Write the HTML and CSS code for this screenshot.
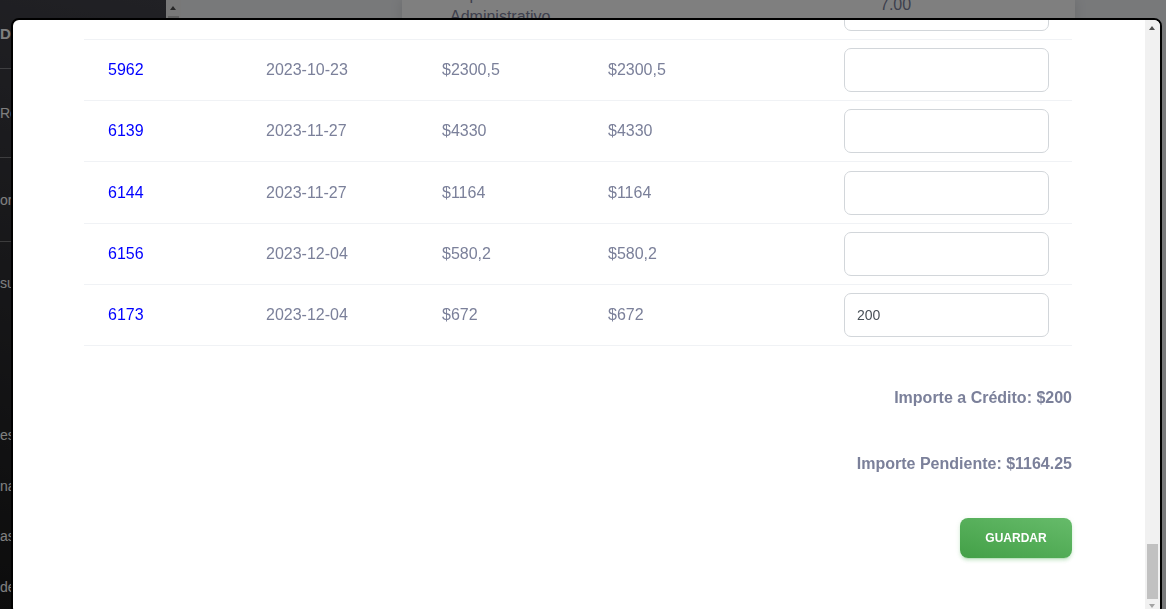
FILE: index.html
```html
<!DOCTYPE html>
<html lang="es">
<head>
<meta charset="utf-8">
<title>Registrar abono</title>
<link rel="stylesheet" href="styles.css">
</head>
<body>
<div class="page">
  <aside class="sidenav">
    <div class="sidenav-inner">
      <div class="brand">Distribuidora</div>
      <hr class="divider">
      <div class="nav-block nav-block-a">Roles</div>
      <hr class="divider">
      <div class="nav-block nav-block-b">ordenes</div>
      <hr class="divider">
      <ul class="nav-list">
        <li class="nav-item">sucursales</li>
        <li class="nav-item nav-item-in">Clientes</li>
        <li class="nav-item nav-item-in">Pagos</li>
        <li class="nav-item">estados</li>
        <li class="nav-item">nacional</li>
        <li class="nav-item">asesores</li>
        <li class="nav-item">devoluciones</li>
        <li class="nav-item nav-item-in">Salir</li>
      </ul>
    </div>
    <div class="vscroll vscroll-top" aria-hidden="true">
      <span class="vscroll-btn vscroll-up"></span>
      <span class="vscroll-track"><span class="vscroll-thumb thumb-side"></span></span>
      <span class="vscroll-btn vscroll-down"></span>
    </div>
  </aside>
  <main class="main">
    <section class="card">
      <div class="card-row">
        <div class="card-cell card-concept">Papelería<br>Administrativo</div>
        <div class="card-cell card-amount">7.00</div>
      </div>
    </section>
  </main>
</div>

<div class="backdrop"></div>

<div class="modal">
  <div class="modal-scroll">
    <div class="modal-body">
      <h5 class="modal-title">Registrar abono</h5>
      <div class="invoice-table" id="rows">
        <div class="row row-head">
          <div class="cell">Folio</div>
          <div class="cell">Fecha</div>
          <div class="cell">Total</div>
          <div class="cell">Saldo</div>
          <div class="cell">Abono</div>
        </div>
        <div class="row" id="first-visible">
          <div class="cell"><a class="folio" href="#">5962</a></div>
          <div class="cell">2023-10-23</div>
          <div class="cell">$2300,5</div>
          <div class="cell">$2300,5</div>
          <div class="cell cell-input"><input class="amount-input" type="text"></div>
        </div>
        <div class="row">
          <div class="cell"><a class="folio" href="#">6139</a></div>
          <div class="cell">2023-11-27</div>
          <div class="cell">$4330</div>
          <div class="cell">$4330</div>
          <div class="cell cell-input"><input class="amount-input" type="text"></div>
        </div>
        <div class="row">
          <div class="cell"><a class="folio" href="#">6144</a></div>
          <div class="cell">2023-11-27</div>
          <div class="cell">$1164</div>
          <div class="cell">$1164</div>
          <div class="cell cell-input"><input class="amount-input" type="text"></div>
        </div>
        <div class="row">
          <div class="cell"><a class="folio" href="#">6156</a></div>
          <div class="cell">2023-12-04</div>
          <div class="cell">$580,2</div>
          <div class="cell">$580,2</div>
          <div class="cell cell-input"><input class="amount-input" type="text"></div>
        </div>
        <div class="row">
          <div class="cell"><a class="folio" href="#">6173</a></div>
          <div class="cell">2023-12-04</div>
          <div class="cell">$672</div>
          <div class="cell">$672</div>
          <div class="cell cell-input"><input class="amount-input" type="text" value="200"></div>
        </div>
      </div>
      <div class="totals">
        <p class="total">Importe a Crédito: $200</p>
        <p class="total">Importe Pendiente: $1164.25</p>
        <button class="btn-save" type="button">Guardar</button>
      </div>
    </div>
  </div>
  <div class="vscroll vscroll-end" aria-hidden="true">
    <span class="vscroll-btn vscroll-up"></span>
    <span class="vscroll-track"><span class="vscroll-thumb thumb-modal"></span></span>
    <span class="vscroll-btn vscroll-down vscroll-disabled"></span>
  </div>
</div>
<script src="app.js"></script>
</body>
</html>
```

FILE: styles.css
```css
html, body {
  margin: 0;
  padding: 0;
  height: 100%;
  overflow: hidden;
  font-family: "Liberation Sans", Arial, sans-serif;
}

.page {
  display: flex;
  height: 100vh;
  background: #f0f2f5;
}

/* ---------- classic scrollbar (drawn) ---------- */
.vscroll {
  flex: 0 0 15px;
  width: 15px;
  display: flex;
  flex-direction: column;
  background: #f1f1f1;
}

.vscroll-btn {
  position: relative;
  flex: 0 0 15px;
  height: 15px;
}

.vscroll-up::after,
.vscroll-down::after {
  content: "";
  position: absolute;
  left: 4px;
  border-left: 3.5px solid transparent;
  border-right: 3.5px solid transparent;
}

.vscroll-up::after {
  top: 6px;
  border-bottom: 4px solid #505050;
}

.vscroll-down::after {
  top: 5px;
  border-top: 4px solid #505050;
}

.vscroll-disabled::after {
  border-top-color: #a3a3a3;
}

.vscroll-track {
  flex: 1;
  display: flex;
  flex-direction: column;
}

.vscroll-end .vscroll-track {
  justify-content: flex-end;
}

.vscroll-thumb {
  margin: 0 2px;
  background: #c1c1c1;
}

.thumb-side {
  height: 280px;
  margin-top: 1px;
}

.thumb-modal {
  height: 55px;
}

/* ---------- background page ---------- */
.sidenav {
  flex: 0 0 181px;
  display: flex;
  height: 100vh;
}

.sidenav-inner {
  width: 166px;
  flex: 0 0 166px;
  overflow: hidden;
  background: linear-gradient(195deg, #42424a, #191919);
  color: #ffffff;
  font-size: 14px;
}

.brand {
  height: 68px;
  line-height: 68px;
  font-size: 15px;
  font-weight: 700;
  white-space: nowrap;
}

.divider {
  margin: 0;
  border: 0;
  height: 1px;
  background: rgba(255, 255, 255, 0.35);
}

.nav-block {
  display: flex;
  align-items: center;
  white-space: nowrap;
}

.nav-block-a { height: 88px; }
.nav-block-b { height: 83px; }

.nav-list {
  list-style: none;
  margin: 0;
  padding: 16px 0 0;
}

.nav-item {
  height: 50.7px;
  line-height: 50px;
  white-space: nowrap;
}

.nav-item-in {
  padding-left: 40px;
}

.main {
  flex: 1;
  display: flex;
  padding: 0 91px 0 221px;
}

.card {
  width: 673px;
  background: #ffffff;
  box-shadow: 0 0 12px rgba(0, 0, 0, 0.12);
  color: #7b809a;
  font-size: 16px;
}

.card-row {
  display: flex;
  align-items: center;
  margin-top: -16px;
  padding-left: 48px;
}

.card-concept {
  width: 430px;
  line-height: 22px;
}

.card-amount {
  line-height: 22px;
  padding-bottom: 2px;
}

/* ---------- backdrop + modal ---------- */
.backdrop {
  position: fixed;
  inset: 0;
  background: rgba(0, 0, 0, 0.5);
}

.modal {
  position: fixed;
  left: 11px;
  top: 18px;
  width: 1151px;
  height: 598px;
  box-sizing: border-box;
  display: flex;
  border: 2px solid #000000;
  border-radius: 8px;
  background: #ffffff;
  overflow: hidden;
}

.modal-scroll {
  flex: 1;
  min-width: 0;
  display: flex;
  flex-direction: column-reverse;
  overflow-y: scroll;
  overflow-x: hidden;
  scrollbar-width: none;
}

.modal-body {
  padding: 24px 73px 56px 71px;
}

.modal-title {
  margin: 0 0 24px;
  font-size: 20px;
  color: #344767;
}

.invoice-table {
  width: 988px;
  color: #7b809a;
  font-size: 16px;
}

.row {
  display: grid;
  grid-template-columns: 158px 176px 166px 236px 252px;
  align-items: center;
  border-bottom: 1px solid #f0f2f5;
}

.cell {
  padding: 8.1px 0 8.1px 24px;
  line-height: 24px;
  white-space: nowrap;
}

.cell-input {
  line-height: 0;
}

.row-head .cell {
  font-size: 12px;
  font-weight: 700;
  text-transform: uppercase;
  line-height: 44px;
}

.folio {
  color: #0000ff;
  text-decoration: none;
}

.amount-input {
  box-sizing: border-box;
  width: 205px;
  height: 44px;
  margin: 0;
  padding: 0 12px;
  border: 1px solid #d2d6da;
  border-radius: 7px;
  background: #ffffff;
  font-family: "Liberation Sans", Arial, sans-serif;
  font-size: 14px;
  color: #495057;
  outline: none;
}

.totals {
  display: flex;
  flex-direction: column;
  align-items: flex-end;
  padding-top: 40px;
  gap: 42px;
}

.total {
  margin: 0;
  font-size: 16px;
  line-height: 24px;
  font-weight: 700;
  color: #7b809a;
}

.btn-save {
  width: 112px;
  height: 40px;
  border: 0;
  border-radius: 8px;
  background: linear-gradient(195deg, #66bb6a, #43a047);
  color: #ffffff;
  font-family: "Liberation Sans", Arial, sans-serif;
  font-size: 12px;
  font-weight: 700;
  text-transform: uppercase;
  box-shadow: 0 3px 3px 0 rgba(76, 175, 80, 0.15), 0 3px 1px -2px rgba(76, 175, 80, 0.2), 0 1px 5px 0 rgba(76, 175, 80, 0.15);
  cursor: pointer;
}
```

FILE: app.js
```js
(function () {
  var table = document.getElementById('rows');
  var anchor = document.getElementById('first-visible');
  var frag = document.createDocumentFragment();
  var folio = 5010;
  var day = new Date(2023, 0, 3);
  function pad(n) { return n < 10 ? '0' + n : '' + n; }
  for (var i = 0; i < 90; i++) {
    folio += 5 + (i * 7) % 9;
    if (i % 3 === 0) { day = new Date(day.getTime() + 7 * 86400000); }
    var amount = 300 + (i * 137) % 3900;
    var date = day.getFullYear() + '-' + pad(day.getMonth() + 1) + '-' + pad(day.getDate());
    var row = document.createElement('div');
    row.className = 'row';
    row.innerHTML =
      '<div class="cell"><a class="folio" href="#">' + folio + '</a></div>' +
      '<div class="cell">' + date + '</div>' +
      '<div class="cell">$' + amount + '</div>' +
      '<div class="cell">$' + amount + '</div>' +
      '<div class="cell cell-input"><input class="amount-input" type="text"></div>';
    frag.appendChild(row);
  }
  table.insertBefore(frag, anchor);
  var sc = document.querySelector('.modal-scroll');
  sc.scrollTop = sc.scrollHeight;
})();
```
